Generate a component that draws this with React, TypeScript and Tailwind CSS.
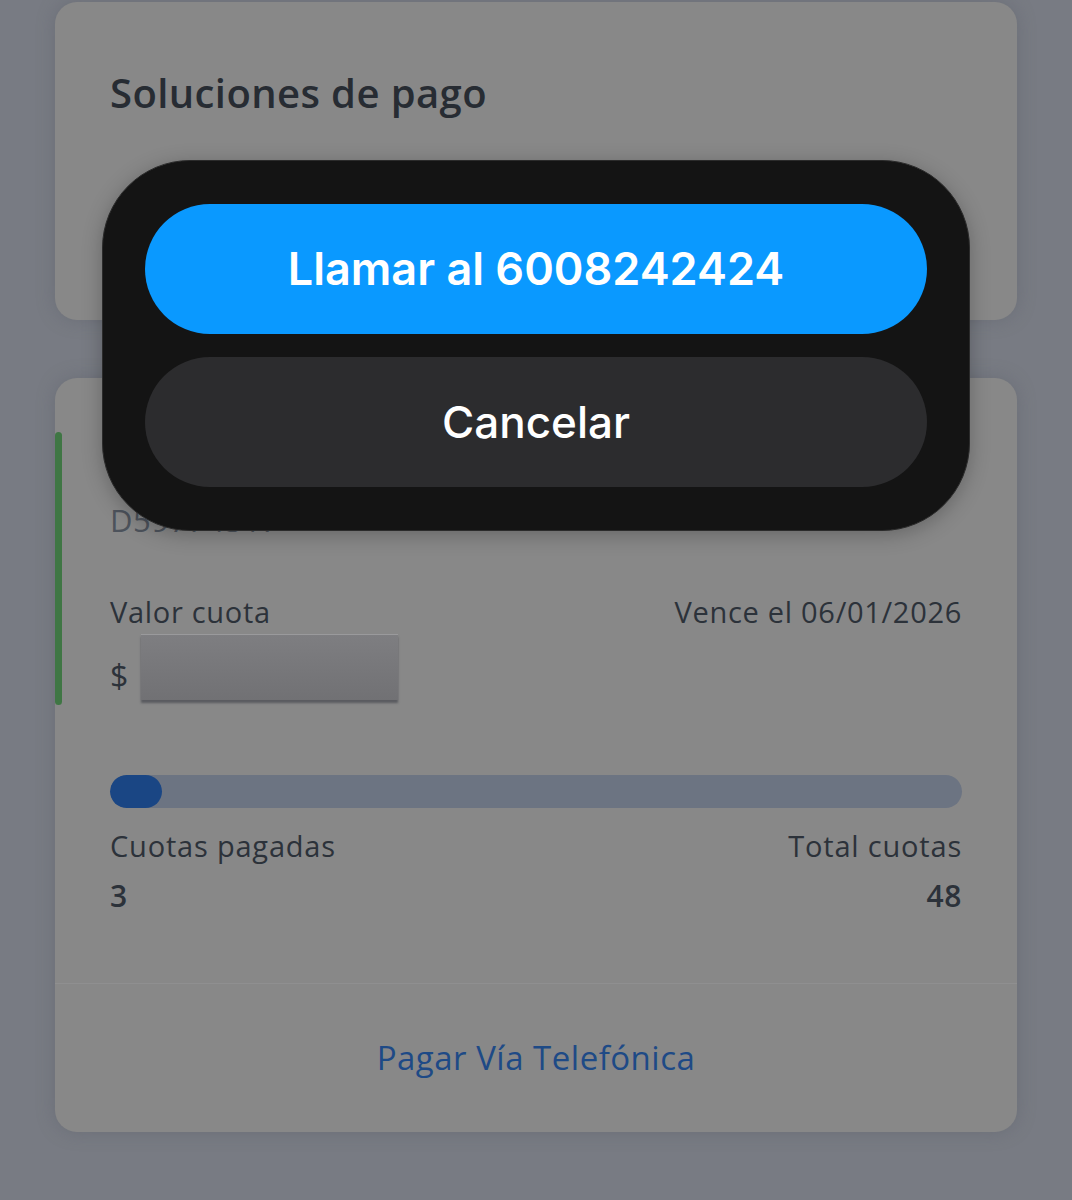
import React from 'react';

const bodyFont = { fontFamily: '"Open Sans", "Liberation Sans", sans-serif' };

const PaymentSolutionsCard: React.FC = () => (
  <div className="h-[318px] rounded-[22px] bg-[#888888] px-[55px] pt-[66px] shadow-[0_0_18px_rgba(90,95,105,0.45)]">
    <h2 className="text-[40px] font-semibold leading-[50px] tracking-[0.4px] text-[#272c33]">Soluciones de pago</h2>
  </div>
);

const CreditCard: React.FC = () => (
  <div className="relative h-[754px] overflow-hidden rounded-[22px] bg-[#888888] shadow-[0_0_18px_rgba(90,95,105,0.45)]">
    <div className="absolute left-0 top-[54px] h-[273px] w-[7px] rounded-full bg-[#3f7644]" />
    <div className="h-[605px] px-[55px] pt-[40px]">
      <p className="text-[32px] font-semibold leading-[44px] text-[#272c33]">Crédito de consumo</p>
      <p className="mt-[38px] text-[31px] leading-[40px] tracking-[0.6px] text-[#4d535c]">D59774317</p>
      <div className="mt-[52px] flex items-center justify-between text-[29px] leading-[40px] tracking-[0.7px] text-[#2c323a]">
        <span>Valor cuota</span>
        <span>Vence el 06/01/2026</span>
      </div>
      <div className="mt-[2px] flex h-[66px] items-end gap-[13px]">
        <span className="pb-[4px] text-[32px] leading-[40px] text-[#2c323a]">$</span>
        <div className="h-[66px] w-[257px] border-t border-[#9a9a9c] bg-gradient-to-b from-[#7e7e81] to-[#717174] shadow-[0_3px_2px_rgba(60,62,70,0.6)]" />
      </div>
      <div className="mt-[75px] h-[33px] w-full overflow-hidden rounded-full bg-[#6c7482]">
        <div className="h-full w-[52px] rounded-full bg-[#1a4684]" />
      </div>
      <div className="mt-[18px] flex items-center justify-between text-[29px] leading-[40px] tracking-[0.8px] text-[#2c323a]">
        <span>Cuotas pagadas</span>
        <span>Total cuotas</span>
      </div>
      <div className="mt-[10px] flex items-center justify-between text-[30px] font-semibold leading-[40px] tracking-[0.6px] text-[#2c323a]">
        <span>3</span>
        <span>48</span>
      </div>
    </div>
    <div className="flex h-[149px] items-center justify-center border-t border-[#8f8f90]">
      <span className="text-[33px] leading-[44px] tracking-[0.5px] text-[#1e4a86]">Pagar Vía Telefónica</span>
    </div>
  </div>
);

const CallSheet: React.FC = () => (
  <div
    className="absolute left-[102px] top-[160px] flex w-[868px] flex-col gap-[23px] rounded-[88px] border border-[#2b2b2b] bg-[#141414] px-[42px] pb-[43px] pt-[43px] shadow-[0_4px_20px_rgba(0,0,0,0.25)]"
    style={{ fontFamily: 'Inter, "Liberation Sans", sans-serif' }}
  >
    <button className="flex h-[130px] items-center justify-center rounded-full bg-[#0a99ff] text-[45px] font-semibold text-white">
      Llamar al 6008242424
    </button>
    <button className="flex h-[130px] items-center justify-center rounded-full bg-[#2c2c2e] text-[44px] font-medium text-white">
      Cancelar
    </button>
  </div>
);

const App: React.FC = () => {
  return (
    <div className="relative h-[1200px] w-[1072px] overflow-hidden bg-[#787b83]" style={bodyFont}>
      <div className="flex flex-col gap-[58px] px-[55px] pt-[2px]">
        <PaymentSolutionsCard />
        <CreditCard />
      </div>
      <CallSheet />
    </div>
  );
};

export default App;
